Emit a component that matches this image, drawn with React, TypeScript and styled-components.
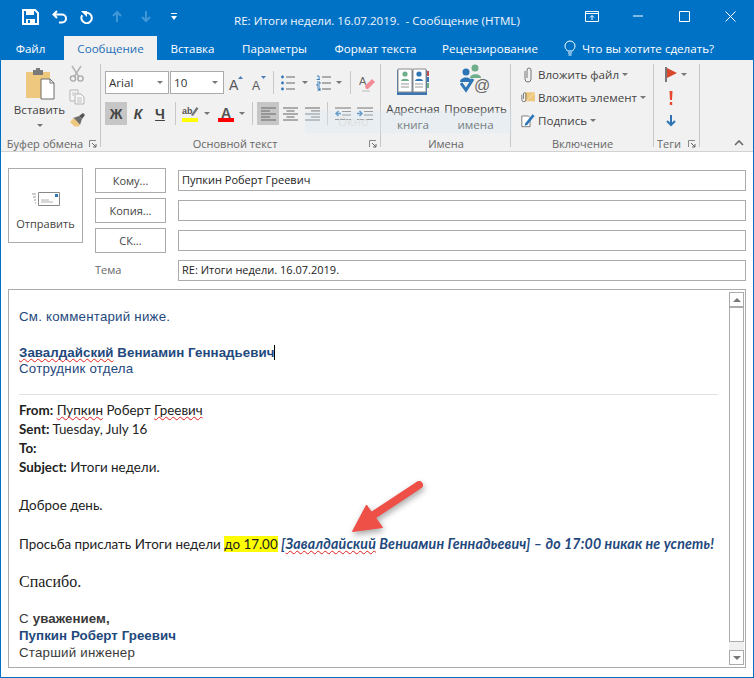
import React from "react";
import styled, { createGlobalStyle } from "styled-components";

const GlobalStyle = createGlobalStyle`
  html, body { margin: 0; padding: 0; background: #fff; }
  body { font-family: "Open Sans", "Liberation Sans", sans-serif; }
`;

const BLUE = "#0072c6";

const Window = styled.div`
  position: relative;
  width: 754px;
  height: 678px;
  box-sizing: border-box;
  border: 1px solid ${BLUE};
  border-top: 0;
  display: flex;
  flex-direction: column;
  overflow: hidden;
`;

const TitleBar = styled.div`
  height: 36px;
  flex: none;
  background: ${BLUE};
  display: flex;
  align-items: center;
  color: #fff;
`;

const Qat = styled.div`
  width: 233px;
  display: flex;
  align-items: center;
  padding: 0 0 3px 14px;
  box-sizing: border-box;
`;

const QatBtn = styled.div<{ $w: number }>`
  width: ${(p) => p.$w}px;
  flex: none;
  display: flex;
  justify-content: center;
`;

const Title = styled.div`
  width: 335px;
  font-size: 11.6px;
  white-space: pre;
  color: #f2f7fb;
  padding-top: 4px;
`;

const Controls = styled.div`
  flex: 1;
  display: flex;
  align-items: center;
  padding-bottom: 4px;
`;

const CtrlBtn = styled.div`
  width: 46px;
  flex: none;
  display: flex;
  justify-content: center;
`;

const TabBar = styled.div`
  height: 24px;
  flex: none;
  background: ${BLUE};
  display: flex;
  align-items: stretch;
  padding-left: 15px;
  color: #fff;
  font-size: 11.6px;
`;

const Tab = styled.div<{ $active?: boolean; $w: number; $mr?: number }>`
  width: ${(p) => p.$w}px;
  margin-right: ${(p) => p.$mr ?? 0}px;
  display: flex;
  align-items: center;
  justify-content: center;
  gap: 6px;
  white-space: nowrap;
  background: ${(p) => (p.$active ? "#f1f1f1" : "transparent")};
  color: ${(p) => (p.$active ? "#1f6fb8" : "#fff")};
`;

const Ribbon = styled.div`
  position: relative;
  height: 92px;
  flex: none;
  box-sizing: border-box;
  background: #f1f1f1;
  border-bottom: 1px solid #d2d2d2;
  padding-top: 4px;
  display: flex;
  color: #444;
  font-size: 11.6px;
`;

const Group = styled.div<{ $w: number }>`
  position: relative;
  width: ${(p) => p.$w}px;
  height: 87px;
  flex: none;
  display: flex;
  flex-direction: column;
  &::after {
    content: "";
    position: absolute;
    right: 0;
    top: 0;
    height: 83px;
    width: 1px;
    background: #c8c8c8;
  }
`;

const GroupBody = styled.div<{ $pl?: number }>`
  flex: 1;
  display: flex;
  min-height: 0;
  padding-left: ${(p) => p.$pl ?? 0}px;
`;

const GroupLabel = styled.div<{ $plain?: boolean; $left?: boolean }>`
  position: relative;
  height: 16px;
  line-height: 16px;
  margin-top: 1px;
  margin-bottom: -1px;
  text-align: ${(p) => (p.$left ? "left" : "center")};
  color: #666;
  font-size: 11px;
  padding-right: ${(p) => (p.$plain || p.$left ? 0 : 12)}px;
  padding-left: ${(p) => (p.$left ? 3 : 0)}px;
  white-space: nowrap;
`;

const Launcher = styled.svg`
  position: absolute;
  right: 4px;
  top: 4px;
`;

const Column = styled.div<{ $w: number; $pt?: number }>`
  width: ${(p) => p.$w}px;
  padding-top: ${(p) => p.$pt ?? 0}px;
  display: flex;
  flex-direction: column;
  align-items: center;
  flex: none;
`;

const BigLabel = styled.div<{ $mt?: number }>`
  margin-top: ${(p) => p.$mt ?? 6}px;
  text-align: center;
  line-height: 16px;
  white-space: nowrap;
  color: #444;
`;

const SmallStack = styled.div`
  width: 16px;
  padding-top: 1px;
  display: flex;
  flex-direction: column;
  align-items: center;
  gap: 7px;
`;

const FontRows = styled.div`
  padding: 7px 0 0 4px;
  display: flex;
  flex-direction: column;
  gap: 8px;
`;

const ToolRow = styled.div`
  display: flex;
  align-items: center;
  height: 23px;
`;

const Combo = styled.div<{ $w: number }>`
  width: ${(p) => p.$w}px;
  height: 23px;
  box-sizing: border-box;
  background: #fff;
  border: 1px solid #ababab;
  margin-right: 1px;
  padding: 0 5px 0 3px;
  display: flex;
  align-items: center;
  justify-content: space-between;
  color: #333;
  font-size: 11.6px;
`;

const Caret = styled.span<{ $ml?: number; $mr?: number; $mt?: number; $up?: boolean; $size?: number }>`
  display: inline-block;
  flex: none;
  width: 0;
  height: 0;
  margin-left: ${(p) => p.$ml ?? 0}px;
  margin-right: ${(p) => p.$mr ?? 0}px;
  margin-top: ${(p) => p.$mt ?? 0}px;
  border-left: ${(p) => p.$size ?? 3}px solid transparent;
  border-right: ${(p) => p.$size ?? 3}px solid transparent;
  ${(p) =>
    p.$up
      ? `border-bottom: ${p.$size ?? 3}px solid #777;`
      : `border-top: ${p.$size ?? 3}px solid #777;`}
`;

const Tool = styled.div<{ $w: number; $active?: boolean; $ml?: number }>`
  width: ${(p) => p.$w}px;
  margin-left: ${(p) => p.$ml ?? 0}px;
  height: 23px;
  flex: none;
  display: flex;
  align-items: center;
  justify-content: center;
  background: ${(p) => (p.$active ? "#c6c6c6" : "transparent")};
`;

const Sep = styled.div<{ $mx?: number }>`
  width: 1px;
  height: 23px;
  flex: none;
  margin: 0 ${(p) => p.$mx ?? 5}px;
  background: #c8c8c8;
`;

const FormatLetter = styled.span<{ $italic?: boolean; $underline?: boolean }>`
  font-family: "Liberation Sans", sans-serif;
  font-weight: 700;
  font-size: 14px;
  color: #444;
  font-style: ${(p) => (p.$italic ? "italic" : "normal")};
  text-decoration: ${(p) => (p.$underline ? "underline" : "none")};
`;

const IncludeList = styled.div`
  padding-left: 10px;
  display: flex;
  flex-direction: column;
  gap: 2px;
`;

const IncludeRow = styled.div`
  height: 21px;
  display: flex;
  align-items: center;
  gap: 3px;
  color: #444;
  white-space: nowrap;
`;

const IncludeIcon = styled.div`
  width: 14px;
  display: flex;
  justify-content: center;
`;

const TagList = styled.div`
  padding-left: 11px;
  display: flex;
  flex-direction: column;
  gap: 2px;
`;

const TagRow = styled.div<{ $pl?: number }>`
  height: 21px;
  padding-left: ${(p) => p.$pl ?? 0}px;
  display: flex;
  align-items: center;
`;

const Collapse = styled.svg`
  position: absolute;
  right: 9px;
  bottom: 5px;
`;

const GhostHint = styled.div`
  position: absolute;
  left: 304px;
  top: 51px;
  width: 207px;
  height: 22px;
  background: rgba(214, 232, 244, 0.35);
  color: #dfdfdf;
  font-size: 12px;
  line-height: 22px;
  padding-left: 33px;
  box-sizing: border-box;
  pointer-events: none;
`;

const Compose = styled.div`
  flex: 1;
  min-height: 0;
  background: #fff;
  padding: 16px 7px 9px;
  display: flex;
  flex-direction: column;
  gap: 6px;
`;

const Header = styled.div`
  display: flex;
  align-items: flex-start;
  gap: 12px;
`;

const SendButton = styled.div`
  width: 75px;
  height: 75px;
  box-sizing: border-box;
  border: 1px solid #ababab;
  display: flex;
  flex-direction: column;
  align-items: center;
  padding-top: 22px;
  gap: 10px;
  color: #444;
  font-size: 11px;
`;

const Fields = styled.div`
  flex: 1;
  display: grid;
  grid-template-columns: 71px 1fr;
  grid-auto-rows: 25px;
  column-gap: 12px;
  row-gap: 5px;
  align-items: center;
`;

const AddrButton = styled.div`
  height: 25px;
  box-sizing: border-box;
  border: 1px solid #ababab;
  display: flex;
  align-items: center;
  justify-content: center;
  color: #444;
  font-size: 11px;
`;

const SubjectLabel = styled.div`
  color: #666;
  font-size: 11px;
  padding-bottom: 2px;
`;

const Field = styled.div`
  height: 21px;
  box-sizing: border-box;
  border: 1px solid #ababab;
  padding: 0 3px;
  line-height: 18px;
  color: #222;
  font-size: 11px;
  white-space: nowrap;
`;

const MailBox = styled.div`
  flex: 1;
  min-height: 0;
  position: relative;
  border: 1px solid #ababab;
  display: flex;
`;

const MailText = styled.div`
  flex: 1;
  padding: 18px 10px 0;
  color: #222;
  font-family: "Lato", "Liberation Sans", sans-serif;
  font-size: 13.4px;
`;

const Line = styled.div<{ $h?: number; $arial?: boolean; $blue?: boolean; $serif?: boolean; $dark?: boolean }>`
  height: ${(p) => p.$h ?? 19}px;
  line-height: ${(p) => p.$h ?? 19}px;
  white-space: nowrap;
  color: ${(p) => (p.$blue ? "#1f497d" : p.$dark ? "#3a3a3a" : "#222")};
  font-family: ${(p) =>
    p.$arial
      ? '"Liberation Sans", sans-serif'
      : p.$serif
        ? '"Liberation Serif", serif'
        : "inherit"};
  font-size: ${(p) => (p.$arial ? "13.3px" : p.$serif ? "16px" : "inherit")};
  letter-spacing: ${(p) => (p.$arial ? "0.22px" : "0")};
  b {
    letter-spacing: ${(p) => (p.$arial ? "0.05px" : "0")};
  }
`;

const Rule = styled.div`
  height: 1px;
  background: #e1e1e1;
  margin: 17px 0 6px;
  width: 699px;
`;

const Misspelled = styled.span`
  text-decoration: underline wavy #e02020;
  text-decoration-thickness: 1px;
  text-underline-offset: 1px;
  text-decoration-skip-ink: none;
`;

const Marked = styled.span`
  background: #ffff00;
`;

const Comment = styled.span`
  color: #1f497d;
  font-style: italic;
  font-weight: 700;
  font-size: 14.2px;
  letter-spacing: 0.15px;
`;

const TextCursor = styled.span`
  display: inline-block;
  width: 1px;
  height: 15px;
  background: #000;
  vertical-align: -3px;
`;

const ScrollBar = styled.div`
  width: 15px;
  flex: none;
  margin: 2px 1px 2px 0;
  display: flex;
  flex-direction: column;
  background: #f0f0f0;
  box-sizing: border-box;
`;

const ScrollArrow = styled.div`
  height: 15px;
  flex: none;
  box-sizing: border-box;
  border: 1px solid #ababab;
  background: #fff;
  display: flex;
  align-items: center;
  justify-content: center;
`;

const ScrollThumb = styled.div`
  flex: 1;
  background: #fff;
  border: 1px solid #ababab;
  box-sizing: border-box;
  margin-bottom: 8px;
`;

const ArrowOverlay = styled.svg`
  position: absolute;
  left: 330px;
  top: 180px;
  filter: drop-shadow(1px 3px 3px rgba(0, 0, 0, 0.35));
`;

const Small = ({ children, w, h = 16 }: { children: React.ReactNode; w: number; h?: number }) => (
  <svg width={w} height={h} viewBox={`0 0 ${w} ${h}`}>
    {children}
  </svg>
);

const SaveIcon = () => (
  <Small w={17} h={16}>
    <path d="M1 1h12l3 3v11H1z" fill="none" stroke="#fff" strokeWidth="2" />
    <path d="M4 1h8v5H4zM4 10h9v5H4z" fill="#fff" />
    <path d="M6 11h2v3H6z" fill={BLUE} />
  </Small>
);
const UndoIcon = () => (
  <Small w={16} h={14}>
    <path d="M1.500 4.500h8.500a4 4 0 0 1 0 8H7M5 1 1.500 4.500 5 8" fill="none" stroke="#fff" strokeWidth="2" />
  </Small>
);
const RedoIcon = () => (
  <Small w={14} h={14}>
    <path d="M6 2.800A5.200 5.200 0 1 1 2.200 5.200" fill="none" stroke="#fff" strokeWidth="2" />
    <path d="M1 1h6v6z" fill="#fff" />
  </Small>
);
const FadedArrow = ({ up }: { up?: boolean }) => (
  <Small w={12} h={13}>
    <path
      d={up ? "M6 12V2M2 6l4-4 4 4" : "M6 1v10M2 7l4 4 4-4"}
      fill="none"
      stroke="#3f97d6"
      strokeWidth="2"
    />
  </Small>
);
const QatMore = () => (
  <Small w={8} h={9}>
    <path d="M1 1h6v1H1z" fill="#fff" />
    <path d="M1 4h6L4 8z" fill="#fff" />
  </Small>
);

const PasteIcon = () => (
  <svg width="30" height="33" viewBox="0 0 30 33">
    <path d="M1 4h24v26H1z" fill="#edc87e" />
    <path d="M8 2h10v5H8z" fill="#7a7a7a" />
    <path d="M11 0h4v3h-4z" fill="#7a7a7a" />
    <path d="M16 11h9l4 4v16H16z" fill="#fff" stroke="#6d6d6d" />
    <path d="M25 11v4h4" fill="none" stroke="#6d6d6d" />
  </svg>
);
const ScissorsIcon = () => (
  <Small w={16} h={17}>
    <path d="M3 1l7 11M12 1 5 12" stroke="#b4b4b4" strokeWidth="1.500" fill="none" />
    <circle cx="4" cy="13.500" r="2.600" fill="none" stroke="#a8a8a8" strokeWidth="1.400" />
    <circle cx="11.500" cy="13.500" r="2.600" fill="none" stroke="#a8a8a8" strokeWidth="1.400" />
  </Small>
);
const CopyIcon = () => (
  <Small w={16} h={16}>
    <path d="M1 1h8v11H1z" fill="#f6f6f6" stroke="#b5b5b5" />
    <path d="M6 5h6l3 3v7H6z" fill="#f6f6f6" stroke="#b5b5b5" />
    <path d="M3 4h4M3 6h2M8 9h5M8 11h5M8 13h5" stroke="#c4c4c4" />
  </Small>
);
const BrushIcon = () => (
  <Small w={17} h={16}>
    <path d="M10 4 14 1l2 2-3 4z" fill="#555" />
    <path d="M4 6l6-2 3 3-2 6z" fill="#6f6f6f" />
    <path d="M1 10l4-4 6 7-2 2-2-1-1 1-2-2z" fill="#edc87e" />
  </Small>
);
const GrowIcon = ({ up }: { up?: boolean }) => (
  <svg width="17" height="21" viewBox="0 0 17 21">
    <text x="1" y="18" fontFamily="Liberation Sans" fontSize={up ? 14 : 12} fill="#555">
      A
    </text>
    <path d={up ? "M10 7h5L12.500 4z" : "M10 4h5l-2.500 3z"} fill="#4a7fb5" />
  </svg>
);
const BulletsIcon = () => (
  <Small w={14} h={16}>
    <path d="M5 2h9M5 8h9M5 14h9" stroke="#666" strokeWidth="1" />
    <circle cx="1.500" cy="2" r="1.400" fill="#2e75b6" />
    <circle cx="1.500" cy="8" r="1.400" fill="#2e75b6" />
    <circle cx="1.500" cy="14" r="1.400" fill="#2e75b6" />
  </Small>
);
const NumbersIcon = () => (
  <Small w={15} h={16}>
    <path d="M6 2h9M6 8h9M6 14h9" stroke="#666" strokeWidth="1" />
    <path d="M1 1h2v3M0.500 4.500h3.500M1 7h3v2H1v2h3M1 13h3v1.500H2M4 14.500v1.500H1" stroke="#2e75b6" strokeWidth="0.900" fill="none" />
  </Small>
);
const EraserIcon = () => (
  <svg width="16" height="20" viewBox="0 0 16 20">
    <text x="0" y="12" fontFamily="Liberation Sans" fontSize="11" fill="#666">
      A
    </text>
    <path d="M6 13 13 6l3 3-7 7H7z" fill="#f28b97" />
    <path d="M3 18h8" stroke="#bbb" />
  </svg>
);
const HighlightIcon = () => (
  <svg width="17" height="19" viewBox="0 0 17 19">
    <text x="0" y="10" fontFamily="Liberation Sans" fontSize="9" fontWeight="700" fill="#555">
      ab
    </text>
    <path d="M9 11 14.500 3l2 1.500L11 12z" fill="#777" />
    <rect x="0" y="14" width="16" height="4" fill="#ffff00" />
  </svg>
);
const FontColorIcon = () => (
  <svg width="17" height="19" viewBox="0 0 17 19">
    <text x="3" y="14" fontFamily="Liberation Sans" fontSize="14" fontWeight="700" fill="#555">
      A
    </text>
    <rect x="0" y="14" width="16" height="4" fill="#ff0000" />
  </svg>
);
const AlignIcon = ({ kind }: { kind: "left" | "center" | "right" }) => {
  const lines =
    kind === "left"
      ? "M0 1h15M0 4h9M0 7h15M0 10h9M0 13h15"
      : kind === "center"
        ? "M0 1h15M3.500 4h8M0 7h15M3.500 10h8M0 13h15"
        : "M0 1h15M6 4h9M0 7h15M6 10h9M0 13h15";
  return (
    <Small w={15} h={14}>
      <path d={lines} stroke="#666" strokeWidth="1" />
    </Small>
  );
};
const IndentIcon = ({ out }: { out?: boolean }) => (
  <Small w={16} h={14}>
    <path d="M0 1h16M7 4.500h9M7 8h9M0 12.500h16" stroke="#777" strokeWidth="1" />
    <path d={out ? "M6 6.500H1M3.500 4l-2.500 2.500L3.500 9" : "M0 6.500h5M2.500 4 5 6.500 2.500 9"} fill="none" stroke="#2e75b6" strokeWidth="1.500" />
  </Small>
);
const BookIcon = () => (
  <svg width="32" height="27" viewBox="0 0 32 27">
    <path d="M0 2h30v25H0z" fill="#3a76b4" />
    <path d="M1 1h14v23H1zM16 1h13v23H16z" fill="#fdfdfd" stroke="#8b8b8b" />
    <circle cx="8" cy="6" r="2.600" fill="#6fae8a" />
    <path d="M4 13c0-3 8-3 8 0z" fill="#6fae8a" />
    <circle cx="22" cy="6" r="2.600" fill="#2e75b6" />
    <path d="M18 13c0-3 8-3 8 0z" fill="#2e75b6" />
    <path d="M4 16h8M4 19h8M18 16h8M18 19h8" stroke="#999" />
    <path d="M30 3h2v5h-2z" fill="#c0504d" />
    <path d="M30 9h2v5h-2z" fill="#3a76b4" />
    <path d="M30 15h2v5h-2z" fill="#6fae8a" />
  </svg>
);
const CheckNamesIcon = () => (
  <svg width="32" height="31" viewBox="0 0 32 31">
    <circle cx="15" cy="4" r="3.500" fill="#6fae8a" />
    <path d="M10 14c0-5 11-5 11 0z" fill="#6fae8a" />
    <circle cx="6" cy="8" r="3.500" fill="#2e75b6" />
    <path d="M0 18c0-6 12-6 12 0z" fill="#2e75b6" />
    <path d="M1 19l5 7 7-11" fill="none" stroke="#2e75b6" strokeWidth="3" />
    <text x="14" y="27" fontFamily="Liberation Sans" fontSize="16" fill="#666">
      @
    </text>
  </svg>
);
const ClipIcon = () => (
  <Small w={10} h={16}>
    <path d="M2 4v8a3 3 0 0 0 6 0V3a2 2 0 0 0-4 0v8" fill="none" stroke="#777" strokeWidth="1" />
  </Small>
);
const AttachItemIcon = () => (
  <Small w={17} h={14}>
    <path d="M5 0h12v11H5z" fill="#edc87e" />
    <path d="M5 11 17 1" stroke="#f7e4b9" />
    <path d="M1 3v6a2.500 2.500 0 0 0 5 0V2a1.500 1.500 0 0 0-3 0v6" fill="none" stroke="#666" strokeWidth="1" />
  </Small>
);
const SignatureIcon = () => (
  <Small w={17} h={17}>
    <path d="M1 3h8l2 2v11H1z" fill="#fff" stroke="#666" />
    <path d="M5 12 14 1l2.500 2-9 11-3 1z" fill="#2e75b6" />
  </Small>
);
const FlagIcon = () => (
  <Small w={13} h={15}>
    <path d="M1 0v15" stroke="#777" strokeWidth="2" />
    <path d="M2 1l10 5-10 5z" fill="#d9482b" />
  </Small>
);
const HighPriority = () => (
  <Small w={4} h={14}>
    <path d="M0.500 0h3L3 9H1zM0.800 11h2.400v3H0.800z" fill="#e8462e" />
  </Small>
);
const LowPriority = () => (
  <Small w={10} h={12}>
    <path d="M5 0v10M1 6l4 4 4-4" fill="none" stroke="#2e75b6" strokeWidth="2" />
  </Small>
);
const LampIcon = () => (
  <Small w={12} h={17}>
    <path d="M3.500 11C2 9 1 8 1 6a5 5 0 0 1 10 0c0 2-1 3-2.500 5z" fill="none" stroke="#fff" />
    <path d="M4 13h4M4.500 15h3" stroke="#fff" />
  </Small>
);
const LauncherIcon = () => (
  <Launcher width="8" height="8" viewBox="0 0 8 8">
    <path d="M0.500 7V0.500H7" fill="none" stroke="#888" />
    <path d="M3 3l4 4M7 4v3H4" fill="none" stroke="#666" />
  </Launcher>
);
const EnvelopeIcon = () => (
  <Small w={28} h={15}>
    <path d="M6.500 1.500h21v13h-21z" fill="#fff" stroke="#888" />
    <path d="M9 9h8M9 11h12" stroke="#b0b0b0" />
    <path d="M23 3h3v3h-3z" fill="#2e75b6" />
    <path d="M0 3h4M1 6h3M2 9h2M3 12h1" stroke="#999" />
  </Small>
);

export default function App() {
  return (
    <Window>
      <GlobalStyle />
      <TitleBar>
        <Qat>
          <QatBtn $w={30}><SaveIcon /></QatBtn>
          <QatBtn $w={30}><UndoIcon /></QatBtn>
          <QatBtn $w={24}><RedoIcon /></QatBtn>
          <QatBtn $w={36}><FadedArrow up /></QatBtn>
          <QatBtn $w={22}><FadedArrow /></QatBtn>
          <QatBtn $w={34}><QatMore /></QatBtn>
        </Qat>
        <Title>{"RE: Итоги недели. 16.07.2019.  - Сообщение (HTML)"}</Title>
        <Controls>
          <CtrlBtn>
            <Small w={14} h={11}>
              <path d="M0.500 0.500h13v10h-13zM0 2.500h14" fill="none" stroke="#fff" />
              <path d="M7 9V4.500M5 6.500l2-2 2 2" fill="none" stroke="#fff" />
            </Small>
          </CtrlBtn>
          <CtrlBtn>
            <Small w={10} h={2}><path d="M0 1h10" stroke="#fff" /></Small>
          </CtrlBtn>
          <CtrlBtn>
            <Small w={11} h={11}><path d="M0.500 0.500h10v10h-10z" fill="none" stroke="#fff" /></Small>
          </CtrlBtn>
          <CtrlBtn>
            <Small w={11} h={11}><path d="M0.500 0.500l10 10M10.500 0.500l-10 10" fill="none" stroke="#fff" /></Small>
          </CtrlBtn>
        </Controls>
      </TitleBar>

      <TabBar>
        <Tab $w={29} $mr={19}>Файл</Tab>
        <Tab $w={93} $active>Сообщение</Tab>
        <Tab $w={71}>Вставка</Tab>
        <Tab $w={93}>Параметры</Tab>
        <Tab $w={109}>Формат текста</Tab>
        <Tab $w={120}>Рецензирование</Tab>
        <Tab $w={178}>
          <LampIcon />
          Что вы хотите сделать?
        </Tab>
      </TabBar>

      <Ribbon>
        <Group $w={100}>
          <GroupBody $pl={9}>
            <Column $w={59} $pt={4}>
              <PasteIcon />
              <BigLabel $mt={1}>Вставить</BigLabel>
              <Caret $mt={6} />
            </Column>
            <SmallStack>
              <ScissorsIcon />
              <CopyIcon />
              <BrushIcon />
            </SmallStack>
          </GroupBody>
          <GroupLabel>
            Буфер обмена
            <LauncherIcon />
          </GroupLabel>
        </Group>

        <Group $w={280}>
          <GroupBody>
            <FontRows>
              <ToolRow>
                <Combo $w={64}>
                  Arial <Caret />
                </Combo>
                <Combo $w={54}>
                  10 <Caret />
                </Combo>
                <Tool $w={23}><GrowIcon up /></Tool>
                <Tool $w={22}><GrowIcon /></Tool>
                <Sep $mx={3} />
                <Tool $w={22}><BulletsIcon /></Tool>
                <Caret $ml={3} />
                <Tool $w={26} $ml={2}><NumbersIcon /></Tool>
                <Caret />
                <Sep $mx={8} />
                <Tool $w={16}><EraserIcon /></Tool>
              </ToolRow>
              <ToolRow>
                <Tool $w={22} $active><FormatLetter>Ж</FormatLetter></Tool>
                <Tool $w={22}><FormatLetter $italic>К</FormatLetter></Tool>
                <Tool $w={22}><FormatLetter $underline>Ч</FormatLetter></Tool>
                <Sep $mx={4} />
                <Tool $w={20}><HighlightIcon /></Tool>
                <Caret $ml={4} />
                <Tool $w={26} $ml={3}><FontColorIcon /></Tool>
                <Caret $mr={3} />
                <Sep $mx={4} />
                <Tool $w={22} $active><AlignIcon kind="left" /></Tool>
                <Tool $w={22}><AlignIcon kind="center" /></Tool>
                <Tool $w={22}><AlignIcon kind="right" /></Tool>
                <Sep $mx={4} />
                <Tool $w={22}><IndentIcon out /></Tool>
                <Tool $w={22}><IndentIcon /></Tool>
              </ToolRow>
            </FontRows>
          </GroupBody>
          <GroupLabel>
            Основной текст
            <LauncherIcon />
          </GroupLabel>
        </Group>

        <Group $w={130}>
          <GroupBody>
            <Column $w={64} $pt={4}>
              <BookIcon />
              <BigLabel>
                Адресная
                <br />
                книга
              </BigLabel>
            </Column>
            <Column $w={61}>
              <CheckNamesIcon />
              <BigLabel>
                Проверить
                <br />
                имена
              </BigLabel>
            </Column>
          </GroupBody>
          <GroupLabel $plain>Имена</GroupLabel>
        </Group>

        <Group $w={143}>
          <GroupBody>
            <IncludeList>
              <IncludeRow>
                <IncludeIcon><ClipIcon /></IncludeIcon>
                Вложить файл <Caret />
              </IncludeRow>
              <IncludeRow>
                <IncludeIcon><AttachItemIcon /></IncludeIcon>
                Вложить элемент <Caret />
              </IncludeRow>
              <IncludeRow>
                <IncludeIcon><SignatureIcon /></IncludeIcon>
                Подпись <Caret />
              </IncludeRow>
            </IncludeList>
          </GroupBody>
          <GroupLabel $plain>Включение</GroupLabel>
        </Group>

        <Group $w={46}>
          <GroupBody>
            <TagList>
              <TagRow>
                <FlagIcon />
                <Caret $ml={3} />
              </TagRow>
              <TagRow $pl={4}><HighPriority /></TagRow>
              <TagRow $pl={1}><LowPriority /></TagRow>
            </TagList>
          </GroupBody>
          <GroupLabel $left>
            Теги
            <LauncherIcon />
          </GroupLabel>
        </Group>

        <Collapse width="10" height="6" viewBox="0 0 10 6">
          <path d="M1 5l4-4 4 4" fill="none" stroke="#666" strokeWidth="1.600" />
        </Collapse>

        <GhostHint>Окно</GhostHint>
      </Ribbon>

      <Compose>
        <Header>
          <SendButton>
            <EnvelopeIcon />
            Отправить
          </SendButton>
          <Fields>
            <AddrButton>Кому...</AddrButton>
            <Field>Пупкин Роберт Греевич</Field>
            <AddrButton>Копия...</AddrButton>
            <Field />
            <AddrButton>СК...</AddrButton>
            <Field />
            <SubjectLabel>Тема</SubjectLabel>
            <Field>RE: Итоги недели. 16.07.2019.</Field>
          </Fields>
        </Header>

        <MailBox>
          <MailText>
            <Line $arial $blue $h={17}>См. комментарий ниже.</Line>
            <Line $h={19} />
            <Line $arial $blue $h={17}>
              <b><Misspelled>Завалдайский</Misspelled> Вениамин Геннадьевич</b>
              <TextCursor />
            </Line>
            <Line $arial $blue $h={16}>Сотрудник отдела</Line>
            <Rule />
            <Line><b>From:</b> <Misspelled>Пупкин</Misspelled> Роберт <Misspelled>Греевич</Misspelled></Line>
            <Line><b>Sent:</b> Tuesday, July 16</Line>
            <Line><b>To:</b></Line>
            <Line><b>Subject:</b> Итоги недели.</Line>
            <Line />
            <Line>Доброе день.</Line>
            <Line />
            <Line>
              Просьба прислать Итоги недели <Marked>до 17.00</Marked>{" "}
              <Comment>
                [<Misspelled>Завалдайский</Misspelled> Вениамин Геннадьевич] – до 17:00 никак не успеть!
              </Comment>
            </Line>
            <Line />
            <Line $serif>Спасибо.</Line>
            <Line $h={19} />
            <Line $arial $dark $h={17}>С <b>уважением,</b></Line>
            <Line $arial $blue $h={17}><b>Пупкин Роберт Греевич</b></Line>
            <Line $arial $dark $h={17}>Старший инженер</Line>
          </MailText>
          <ScrollBar>
            <ScrollArrow>
              <Caret $up $size={4} />
            </ScrollArrow>
            <ScrollThumb />
            <ScrollArrow>
              <Caret $size={4} />
            </ScrollArrow>
          </ScrollBar>
          <ArrowOverlay width="100" height="72" viewBox="0 0 100 72">
            <path d="M13.500 61.500 27.500 35 43.500 57.500 Z" fill="#ee4f47" stroke="#ee4f47" strokeLinejoin="round" />
            <path d="M33 46 80 15" stroke="#ee4f47" strokeWidth="8" strokeLinecap="round" />
          </ArrowOverlay>
        </MailBox>
      </Compose>
    </Window>
  );
}
